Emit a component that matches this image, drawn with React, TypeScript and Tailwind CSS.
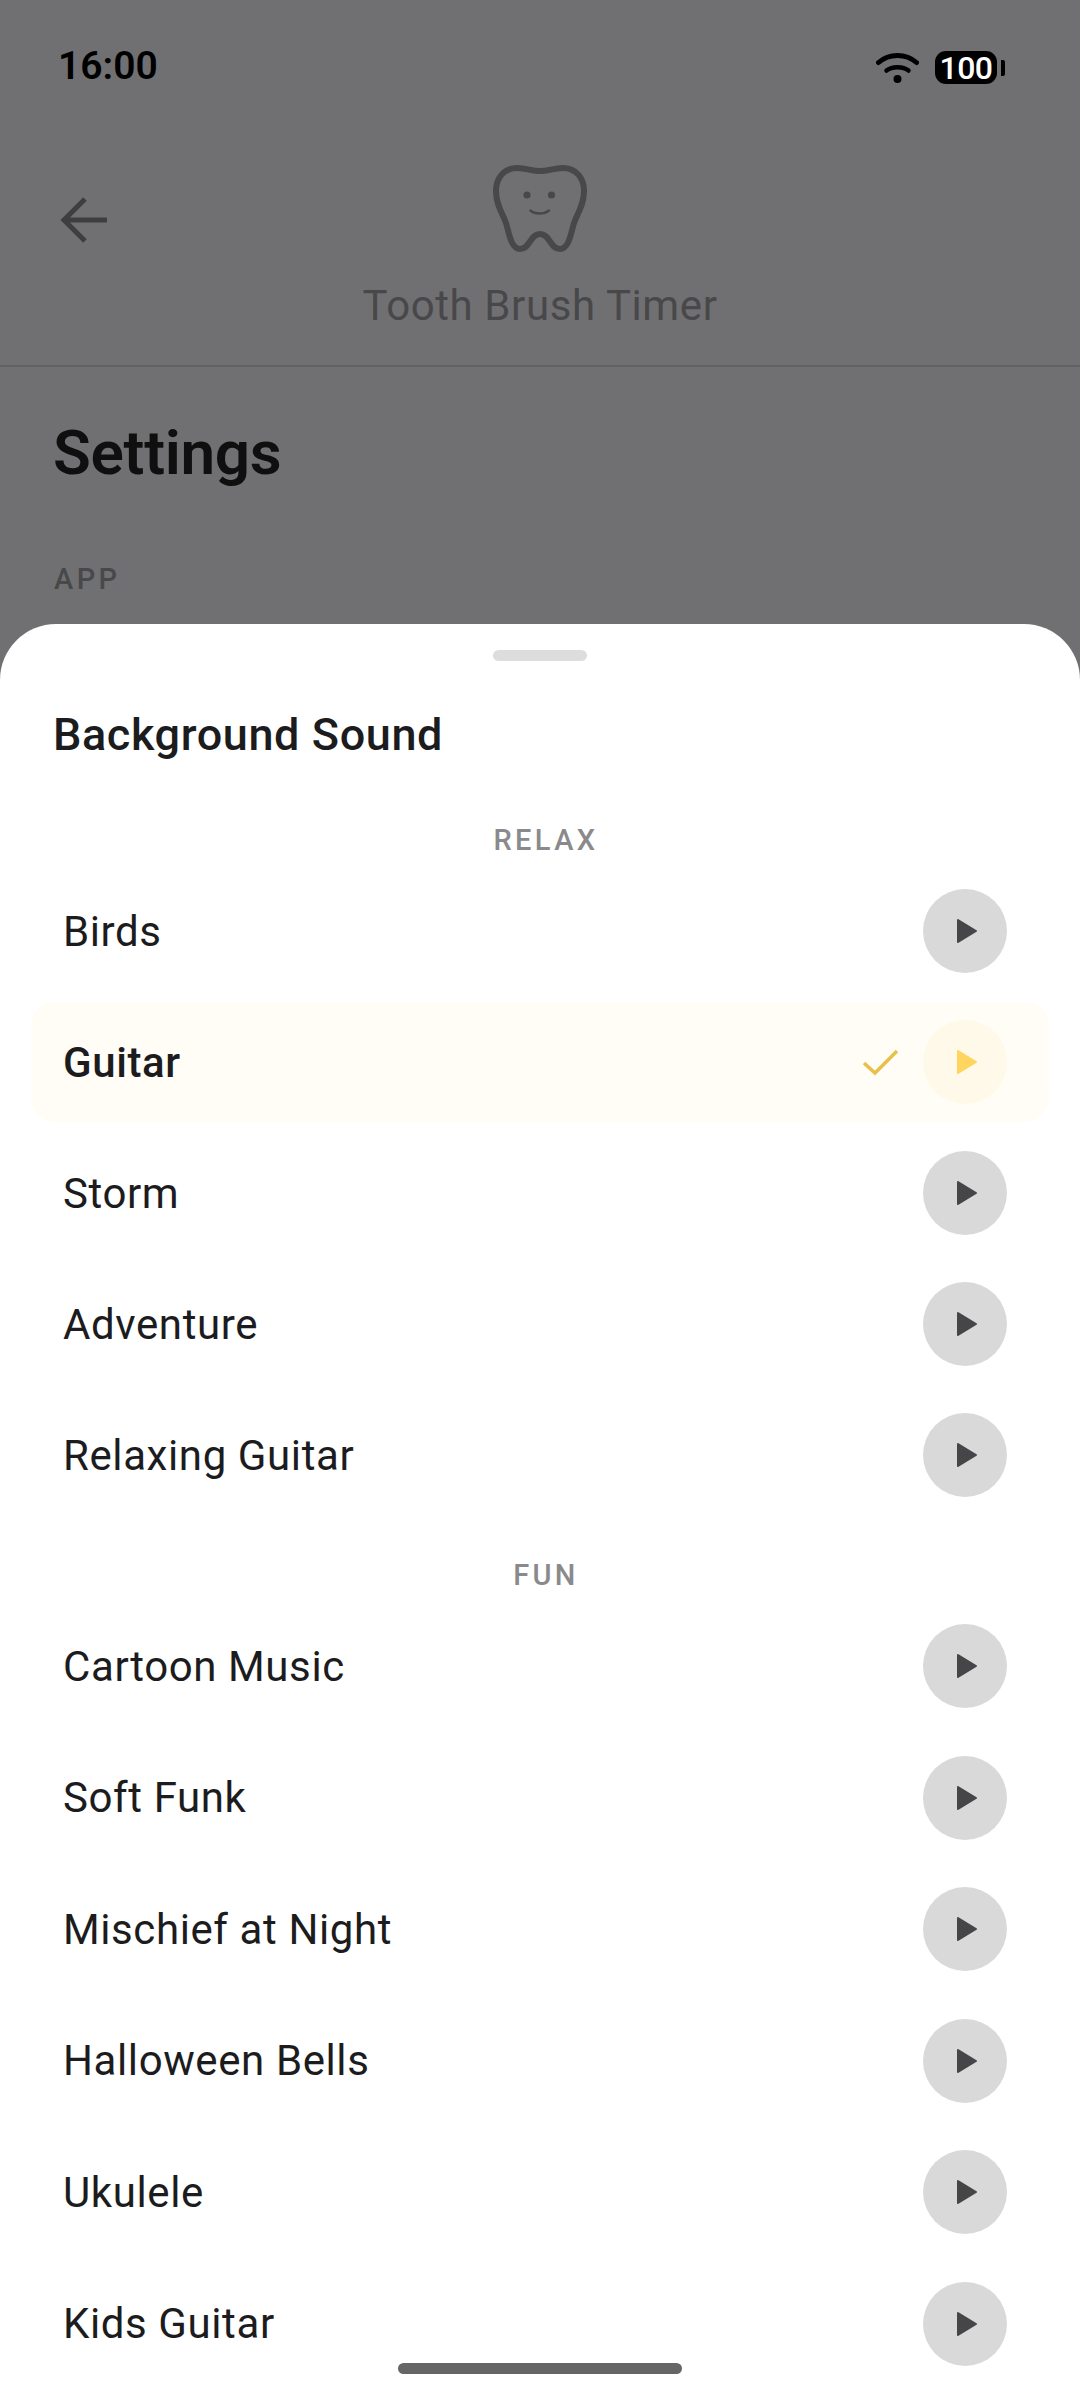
const font = { fontFamily: "Roboto, sans-serif" };

const relax = ["Birds", "Guitar", "Storm", "Adventure", "Relaxing Guitar"];
const fun = ["Cartoon Music", "Soft Funk", "Mischief at Night", "Halloween Bells", "Ukulele", "Kids Guitar"];

function Wifi() {
  return (
    <svg width="43" height="31" viewBox="0 0 43 31" fill="none">
      <path d="M2.5 10.5C13 1 30 1 40.5 10.5" stroke="#000" strokeWidth="5" strokeLinecap="round" />
      <path d="M10.5 18.5C16 14 27 14 32.5 18.5" stroke="#000" strokeWidth="4.5" strokeLinecap="round" />
      <circle cx="21.5" cy="27" r="4" fill="#000" />
    </svg>
  );
}

function Tooth() {
  return (
    <svg width="100" height="92" viewBox="0 0 100 92" fill="none">
      <path
        d="M50 8C42 8 36 5 27 5C14 5 6 15 6 28C6 42 12 49 16 60C19 70 21 86 30 86C40 86 40 71 50 71C60 71 60 86 70 86C79 86 81 70 84 60C88 49 94 42 94 28C94 15 86 5 73 5C64 5 58 8 50 8Z"
        stroke="#48484a"
        strokeWidth="6"
      />
      <circle cx="37" cy="32" r="3.6" fill="#48484a" />
      <circle cx="61.5" cy="32" r="3.6" fill="#48484a" />
      <path d="M40.5 47.5C45 51.5 54 51.5 59 47.5" stroke="#48484a" strokeWidth="2.5" strokeLinecap="round" />
    </svg>
  );
}

function PlayIcon({ color }: { color: string }) {
  return (
    <svg width="24" height="28" viewBox="0 0 24 28" className="ml-[4px]">
      <path d="M3 3L21 14L3 25Z" fill={color} stroke={color} strokeWidth="2" strokeLinejoin="round" />
    </svg>
  );
}

function Row({ name, active }: { name: string; active?: boolean }) {
  return (
    <div
      className={`mx-[31px] flex h-[120px] items-center rounded-[24px] pl-[32px] pr-[42px] ${active ? "bg-[#fffdf6]" : ""}`}
    >
      <span className={`flex-1 text-[42px] tracking-[0.6px] text-[#1c1c1e] ${active ? "font-medium" : ""}`}>{name}</span>
      {active && (
        <svg width="37" height="28" viewBox="0 0 37 28" fill="none" className="mr-[24px]">
          <path d="M2 15L13 25L35 3" stroke="#e6c24c" strokeWidth="3.5" />
        </svg>
      )}
      <div className={`flex h-[84px] w-[84px] items-center justify-center rounded-full ${active ? "bg-[#fff9ea]" : "bg-[#d9d9d9]"}`}>
        <PlayIcon color={active ? "#ffd55f" : "#464648"} />
      </div>
    </div>
  );
}

function GroupLabel({ children }: { children: string }) {
  return (
    <div className="pl-3 text-center text-[29px] font-medium leading-[34px] tracking-[3.4px] text-[#8a8a8c]">{children}</div>
  );
}

export default function App() {
  return (
    <div className="relative h-[2400px] w-[1080px] overflow-hidden bg-[#707072]" style={font}>
      <div className="flex h-[130px] items-start justify-between pl-[58px] pr-[75px] pt-[45px]">
        <span className="text-[39px] font-semibold leading-[42px] text-black">16:00</span>
        <div className="flex items-center gap-4 pt-[6px]">
          <Wifi />
          <div className="flex items-center gap-[4px]">
            <div className="flex h-[33px] w-[62px] items-center justify-center rounded-[11px] bg-black text-[32px] font-medium tracking-[-0.5px] text-white">
              100
            </div>
            <div className="h-[16px] w-[4px] rounded-r-[2px] bg-black" />
          </div>
        </div>
      </div>
      <div className="relative h-[237px] border-b-2 border-[#626264]">
        <svg width="48" height="48" viewBox="0 0 48 48" fill="none" className="absolute left-[60px] top-[66px]">
          <path d="M25 3L4 24L25 45M4 24H47" stroke="#3e3e40" strokeWidth="5" />
        </svg>
        <div className="flex flex-col items-center pt-[33px]">
          <Tooth />
          <span className="mt-[26px] text-[42px] leading-[50px] tracking-[0.6px] text-[#48484a]">Tooth Brush Timer</span>
        </div>
      </div>
      <div className="pl-[53px] pt-[50px]">
        <h1 className="text-[62px] font-semibold leading-[72px] tracking-[-0.3px] text-[#0f0f10]">Settings</h1>
        <p className="mt-[73px] pl-px text-[29px] font-medium leading-[34px] tracking-[3.4px] text-[#48484a]">APP</p>
      </div>

      <div className="absolute inset-x-0 bottom-0 top-[624px] overflow-hidden rounded-t-[56px] bg-white">
        <div className="mx-auto mt-[26px] h-[11px] w-[94px] rounded-full bg-[#dddddd]" />
        <h2 className="ml-[53px] mt-[48px] text-[45px] font-medium leading-[52px] tracking-[0.6px] text-[#1c1c1e]">Background Sound</h2>
        <div className="mt-[62px]">
          <GroupLabel>RELAX</GroupLabel>
        </div>
        <div className="mt-[14px] flex flex-col gap-[11px]">
          {relax.map((n) => (
            <Row key={n} name={n} active={n === "Guitar"} />
          ))}
        </div>
        <div className="mt-[43px]">
          <GroupLabel>FUN</GroupLabel>
        </div>
        <div className="mt-[14px] flex flex-col gap-[11.5px]">
          {fun.map((n) => (
            <Row key={n} name={n} />
          ))}
        </div>
      </div>

      <div className="absolute bottom-[26px] left-[398px] h-[11px] w-[284px] rounded-full bg-[#666666]" />
    </div>
  );
}
